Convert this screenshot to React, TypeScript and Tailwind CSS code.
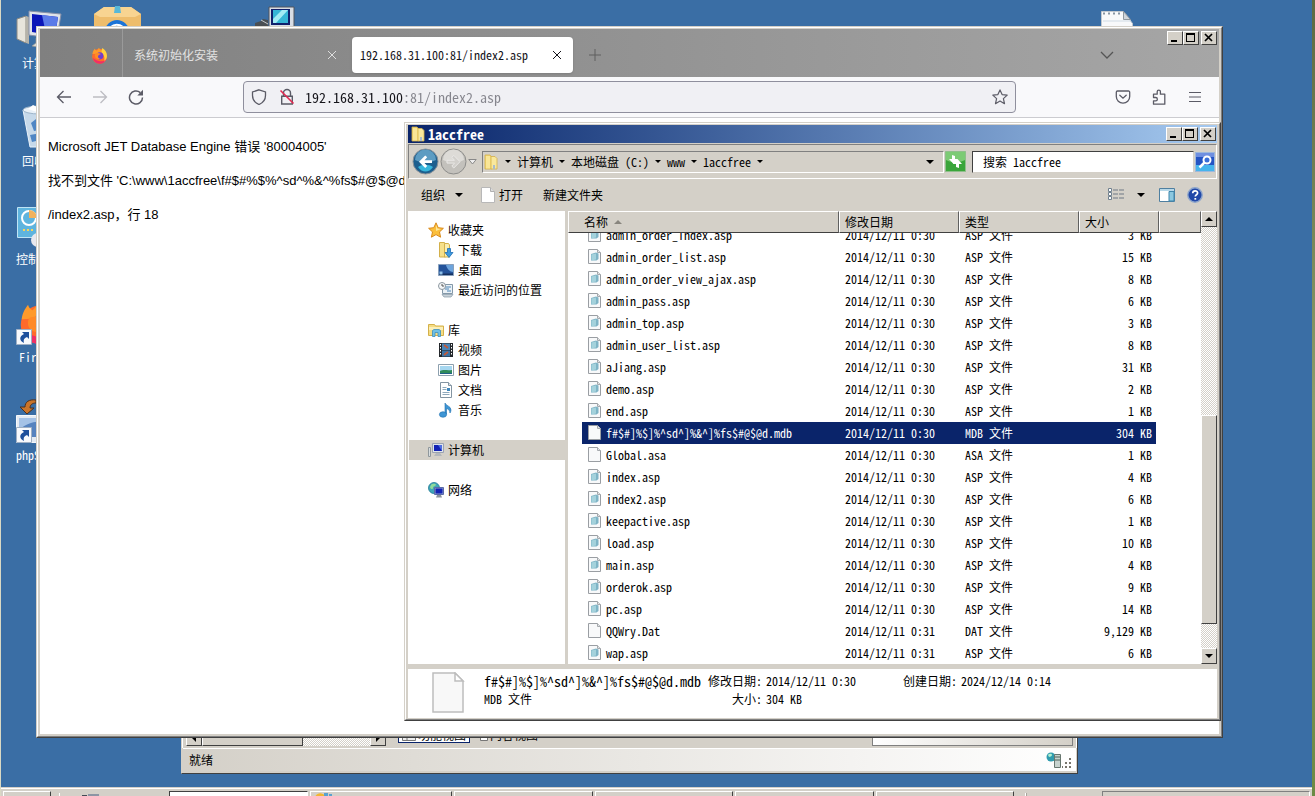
import React from 'react';

const SONG = "[font-family:'Noto_Sans_Mono_CJK_SC','Noto_Sans_CJK_SC',monospace]";
const RAISED = 'border border-t-white border-l-white border-r-[#404040] border-b-[#404040] bg-[#d4d0c8]';
const SUNKEN = 'border border-t-[#808080] border-l-[#808080] border-r-white border-b-white';

type FileKind = 'asp' | 'blank';

interface FileRow {
  name: string;
  date: string;
  type: string;
  size: string;
  kind: FileKind;
  selected?: boolean;
}

const files: FileRow[] = [
  { name: 'admin_order_index.asp', date: '2014/12/11 0:30', type: 'ASP 文件', size: '3 KB', kind: 'asp' },
  { name: 'admin_order_list.asp', date: '2014/12/11 0:30', type: 'ASP 文件', size: '15 KB', kind: 'asp' },
  { name: 'admin_order_view_ajax.asp', date: '2014/12/11 0:30', type: 'ASP 文件', size: '8 KB', kind: 'asp' },
  { name: 'admin_pass.asp', date: '2014/12/11 0:30', type: 'ASP 文件', size: '6 KB', kind: 'asp' },
  { name: 'admin_top.asp', date: '2014/12/11 0:30', type: 'ASP 文件', size: '3 KB', kind: 'asp' },
  { name: 'admin_user_list.asp', date: '2014/12/11 0:30', type: 'ASP 文件', size: '8 KB', kind: 'asp' },
  { name: 'aJiang.asp', date: '2014/12/11 0:30', type: 'ASP 文件', size: '31 KB', kind: 'asp' },
  { name: 'demo.asp', date: '2014/12/11 0:30', type: 'ASP 文件', size: '2 KB', kind: 'asp' },
  { name: 'end.asp', date: '2014/12/11 0:30', type: 'ASP 文件', size: '1 KB', kind: 'asp' },
  { name: 'f#$#]%$]%^sd^]%&^]%fs$#@$@d.mdb', date: '2014/12/11 0:30', type: 'MDB 文件', size: '304 KB', kind: 'blank', selected: true },
  { name: 'Global.asa', date: '2014/12/11 0:30', type: 'ASA 文件', size: '1 KB', kind: 'blank' },
  { name: 'index.asp', date: '2014/12/11 0:30', type: 'ASP 文件', size: '4 KB', kind: 'asp' },
  { name: 'index2.asp', date: '2014/12/11 0:30', type: 'ASP 文件', size: '6 KB', kind: 'asp' },
  { name: 'keepactive.asp', date: '2014/12/11 0:30', type: 'ASP 文件', size: '1 KB', kind: 'asp' },
  { name: 'load.asp', date: '2014/12/11 0:30', type: 'ASP 文件', size: '10 KB', kind: 'asp' },
  { name: 'main.asp', date: '2014/12/11 0:30', type: 'ASP 文件', size: '4 KB', kind: 'asp' },
  { name: 'orderok.asp', date: '2014/12/11 0:30', type: 'ASP 文件', size: '9 KB', kind: 'asp' },
  { name: 'pc.asp', date: '2014/12/11 0:30', type: 'ASP 文件', size: '14 KB', kind: 'asp' },
  { name: 'QQWry.Dat', date: '2014/12/11 0:31', type: 'DAT 文件', size: '9,129 KB', kind: 'blank' },
  { name: 'wap.asp', date: '2014/12/11 0:31', type: 'ASP 文件', size: '6 KB', kind: 'asp' },
];

/* ---------- icons ---------- */

const FileIcon: React.FC<{ kind: FileKind }> = ({ kind }) => (
  <svg width="14" height="16" viewBox="0 0 14 16" className="block">
    <path d="M.5.5h9l3 3v11H.5z" fill="#f8f9fa" stroke="#9a9ea3" />
    <path d="M9.500.5v3h3" fill="#e3e6e8" stroke="#a6aaae" />
    {kind === 'asp' && (
      <>
        <path d="M3 5l5-1.500 2.500 1v5.500l-2 1.500H3z" fill="#7fb4c6" />
        <path d="M3.500 5.500l4.500-1v6l-4.500 1z" fill="#a4d2dc" />
      </>
    )}
  </svg>
);

const FolderIcon = () => (
  <svg width="16" height="16" viewBox="0 0 16 16" className="block">
    <path d="M2 1h5l1.500 2v12H2z" fill="#f3d976" stroke="#d3b04a" strokeWidth=".8" />
    <path d="M8 2.500h4l2 2V15H8z" fill="#f9e89c" stroke="#d3b04a" strokeWidth=".8" />
    <path d="M4 2v12.500M6 2v12.500" stroke="#fff2b8" />
    <path d="M10 11h2v4h-2z" fill="#a9bccb" />
  </svg>
);

const FirefoxIcon: React.FC<{ className?: string }> = ({ className }) => (
  <svg viewBox="0 0 48 48" className={className}>
    <circle cx="24" cy="26" r="21" fill="#ff6a2b" />
    <path d="M4 20C5 11 9 7 11 4c1 4 3 5 5 6 3-3 5-5 6-8 3 4 5 7 12 9 8 4 12 12 11 19l-6-12z" fill="#ff9a2a" />
    <path d="M32 3c8 5 13 12 13 22 0 7-3 14-9 18 3-8 3-16-2-21-4-5-6-11-2-19z" fill="#ffd23e" />
    <path d="M5 31c3 11 11 16 19 16 9 0 17-5 20-14-5 6-11 8-18 7-9-1-15-5-21-9z" fill="#f02f66" />
    <circle cx="25" cy="25" r="10" fill="#6f3fd0" />
    <path d="M13 18c6-2 11 0 15 2-3 2-7 2-8 6-2 4 3 7 8 6-6 5-16 1-17-6-.5-3 0-6 2-8z" fill="#ff8a26" />
  </svg>
);

const ComputerIcon: React.FC<{ className?: string }> = ({ className }) => (
  <svg viewBox="0 0 48 44" className={className}>
    <path d="M1 12l9-3v27l-9-4z" fill="#e7e5dc" stroke="#8c8a82" />
    <path d="M10 9l3 1v27l-3-1z" fill="#b5b3aa" />
    <path d="M13 4l32 3-4 25-28-4z" fill="#dfe3ea" stroke="#8690a8" />
    <path d="M16 7l26 3-3 19-23-4z" fill="#0b16b8" />
    <path d="M26 8l16 2-3 19-9-2z" fill="#5b7be8" />
    <path d="M20 31l10 2 2 5 5 1-3 3-18-3 4-3z" fill="#d8d8d2" stroke="#9a9a94" strokeWidth=".7" />
  </svg>
);

const RecycleIcon = () => (
  <svg viewBox="0 0 48 44" className="h-11 w-12">
    <path d="M7 5l34 0-5 37H14z" fill="#c6d9ea" stroke="#e9f2fa" />
    <ellipse cx="24" cy="5" rx="17" ry="4" fill="#e9f1f8" stroke="#9db4c9" />
    <path d="M12 4l5-4 6 3 5-3 7 5-11 3z" fill="#fff" />
    <path d="M15 18l5-4 4 5-3 1 2 5-5 1zM14 30l11-2 3 6-12 3z" fill="#4f86c4" />
    <path d="M27 15l6 3-3 8-4-5z" fill="#6d9fd4" />
  </svg>
);

const ControlPanelIcon = () => (
  <svg viewBox="0 0 48 44" className="h-11 w-12">
    <path d="M1.500 4.500h43v30h-43z" fill="#5fb4de" stroke="#bfe4f5" />
    <circle cx="13" cy="15" r="7" fill="none" stroke="#fff" strokeWidth="2" />
    <path d="M13 15V7a8 8 0 018 8z" fill="#f2b25c" />
    <path d="M7 27h12" stroke="#f7d65c" strokeWidth="2" strokeDasharray="2 2" />
    <circle cx="22" cy="37" r="7" fill="#e8e8ee" />
    <path d="M26 11h14M26 16h14M26 21h14" stroke="#d5eefa" strokeWidth="2" />
  </svg>
);

const ShortcutArrow = () => (
  <svg viewBox="0 0 16 16" className="absolute bottom-0 left-0 h-4 w-4">
    <path d="M.5.5h15v15H.5z" fill="#f7f9fc" stroke="#9fb0c4" />
    <path d="M6 3h7v7l-2-2c-3 1-4 3-3 6-5-2-5-7 0-9z" fill="#1d4f9c" />
  </svg>
);

const PhpStudyIcon = () => (
  <svg viewBox="0 0 48 44" className="h-11 w-12">
    <path d="M20 1c-7-1-11 2-11 7H4l7 7 7-6h-4c0-3 2-5 6-5z" fill="#c8742a" stroke="#4a3020" />
    <path d="M.5 16.500h44v27H.5z" fill="#e4ebf3" stroke="#f6f9fc" />
    <path d="M3 19h39v19H3z" fill="#5683bf" />
    <path d="M3 31c9-9 21-10 39-8v-4H3z" fill="#a4c2e6" />
  </svg>
);

const CaretDown: React.FC<{ small?: boolean }> = ({ small }) => (
  <svg width={small ? 6 : 8} height={small ? 3 : 4} viewBox="0 0 8 4" className="block shrink-0">
    <path d="M0 0h8L4 4z" fill="#000" />
  </svg>
);

const StarIcon = () => (
  <svg width="16" height="16" viewBox="0 0 16 16">
    <path d="M8 .8l2.200 4.900 5.200.6-3.900 3.600 1.100 5.300L8 12.600l-4.600 2.600 1.100-5.300L.6 6.300l5.200-.6z" fill="#fbbf3b" stroke="#d98a1c" />
    <path d="M8 3l1.400 3.600L13 7 8 9z" fill="#ffe79a" />
  </svg>
);

const DownloadIcon = () => (
  <svg width="16" height="16" viewBox="0 0 16 16">
    <path d="M1.500.5h5l1 1.500v13h-6z" fill="#f6e08a" stroke="#d3b04a" />
    <path d="M6.500 1.500h4l1 1.500v12h-5z" fill="#faeeb0" stroke="#d3b04a" />
    <path d="M9.500 6.500h3v4H15l-4 5-4-5h2.500z" fill="#3f9be0" stroke="#1d6cb4" strokeWidth=".8" />
  </svg>
);

const DesktopIcon = () => (
  <svg width="16" height="16" viewBox="0 0 16 16">
    <path d="M.5 2.500h15v11H.5z" fill="#24539a" stroke="#88a0bc" />
    <path d="M8 3h7v7C12 10 9 7 8 3z" fill="#6da4dc" />
    <path d="M1 11.500h14V13H1z" fill="#15305f" />
    <path d="M1.500 9.500h3v3h-3z" fill="#8fc0e8" />
  </svg>
);

const RecentIcon = () => (
  <svg width="16" height="16" viewBox="0 0 16 16">
    <path d="M4.500 2.500h10v9h-10z" fill="#eaf1f6" stroke="#8498a8" />
    <path d="M7 5h6M7 7h4M9 9h4" stroke="#4c86b8" />
    <path d="M4 12.500h11l-2 2.500H6z" fill="#c9d2d8" stroke="#8498a8" strokeWidth=".7" />
    <circle cx="4" cy="4" r="3.500" fill="#f5f7f8" stroke="#8b969e" />
    <path d="M4 2v2h2" stroke="#555" fill="none" />
  </svg>
);

const LibraryIcon = () => (
  <svg width="16" height="16" viewBox="0 0 16 16">
    <path d="M.5 2.500h6l1 1.500h8v9.500H.5z" fill="#f5dc82" stroke="#d3b04a" />
    <path d="M1 5h14v3H1z" fill="#fbefb8" />
    <path d="M4.500 14.500v-6l1.500-1h5l1.500 1v6h-2.500v-4h-3v4z" fill="#6fc0e6" stroke="#3c8fbe" strokeWidth=".8" />
  </svg>
);

const VideoIcon = () => (
  <svg width="16" height="16" viewBox="0 0 16 16">
    <path d="M1 1h14v14H1z" fill="#23272b" />
    <path d="M4 1.500h8V8H4z" fill="#4a86b8" />
    <path d="M4 8.500h8v6H4z" fill="#3b74a6" />
    <path d="M6 3l4 3M6 13l4-3" stroke="#c05a3a" strokeWidth="2" />
    <path d="M2.500 2v12M13.500 2v12" stroke="#fff" strokeDasharray="1.500 1.500" />
  </svg>
);

const PictureIcon = () => (
  <svg width="16" height="16" viewBox="0 0 16 16">
    <path d="M.5 2.500h15v11H.5z" fill="#fff" stroke="#8da0ae" />
    <path d="M2 4h12v8H2z" fill="#a6d7f0" />
    <path d="M2 9c4-2 7 0 12-1v4H2z" fill="#2f8a5a" />
    <path d="M2 11h12v1H2z" fill="#1f5f86" />
  </svg>
);

const DocumentIcon = () => (
  <svg width="16" height="16" viewBox="0 0 16 16">
    <path d="M2.500.5h8l3 3v12h-11z" fill="#fff" stroke="#8394a2" />
    <path d="M10.500.5v3h3" fill="#dfe6ec" stroke="#8394a2" />
    <path d="M4.500 5.500h4M4.500 7.500h4M4.500 10.500h7M4.500 12.500h7" stroke="#8fa9bc" />
    <path d="M9 6h3v3H9z" fill="#3c86bd" />
  </svg>
);

const MusicIcon = () => (
  <svg width="16" height="16" viewBox="0 0 16 16">
    <path d="M7 1c1 3 6 3 6 7 0 1-.5 2-1 3 0-3-2-4-3.500-4.500V12H7z" fill="#3e95d4" stroke="#1f6fae" strokeWidth=".6" />
    <ellipse cx="5" cy="12.500" rx="3.600" ry="2.800" fill="#3e95d4" stroke="#1f6fae" strokeWidth=".6" />
  </svg>
);

const MonitorIcon = () => (
  <svg width="16" height="16" viewBox="0 0 16 16">
    <path d="M.5 5.500h2v9h-2z" fill="#d8dde0" stroke="#8f979c" />
    <path d="M4.500 1.500h11v9h-11z" fill="#dfe3ea" stroke="#9aa3b2" />
    <path d="M6 3h8v6H6z" fill="#1222b4" />
    <path d="M10 3h4v6z" fill="#4f6fe0" />
    <path d="M8 11h4l2 3H6z" fill="#b3b7bc" />
  </svg>
);

const NetworkIcon = () => (
  <svg width="16" height="16" viewBox="0 0 16 16">
    <circle cx="6" cy="6" r="5.500" fill="#3fa6b8" stroke="#1e7a94" strokeWidth=".8" />
    <path d="M3 3c2-2 5-1 5 0s-3 1-3 3-3 1-3-1z" fill="#8fdc9a" />
    <path d="M6.500 5.500h9v7h-9z" fill="#8fa0d0" stroke="#5a6aa6" />
    <path d="M7.500 6.500h7v5h-7z" fill="#1222b4" />
    <path d="M9 13h4l1 2.500H8z" fill="#8a929c" />
  </svg>
);

/* ---------- shared bits ---------- */

const WindowButtons = () => (
  <div className="flex">
    <button aria-label="最小化" className={`flex h-[14px] w-4 items-end justify-start ${RAISED}`}>
      <svg width="14" height="12" viewBox="0 0 14 12"><path d="M3 8h6v2H3z" /></svg>
    </button>
    <button aria-label="最大化" className={`flex h-[14px] w-4 items-center justify-center ${RAISED}`}>
      <svg width="14" height="12" viewBox="0 0 14 12"><path d="M2 1h9v9H2zm1 2v6h7V3z" fillRule="evenodd" /></svg>
    </button>
    <button aria-label="关闭" className={`ml-0.5 flex h-[14px] w-4 items-center justify-center ${RAISED}`}>
      <svg width="14" height="12" viewBox="0 0 14 12"><path d="M3 2l7 7M10 2L3 9" stroke="#000" strokeWidth="1.700" /></svg>
    </button>
  </div>
);

const shortcuts = [
  { label: '计算机', icon: <ComputerIcon className="h-11 w-12" />, link: false },
  { label: '回收站', icon: <RecycleIcon />, link: false },
  { label: '控制面板', icon: <ControlPanelIcon />, link: false },
  { label: 'Firefox', icon: <FirefoxIcon className="h-11 w-12" />, link: true },
  { label: 'phpStudy', icon: <PhpStudyIcon />, link: true },
];

const DesktopIcons = () => (
  <>
    <ul className="absolute left-0 top-[7px] w-[78px]">
      {shortcuts.map((s) => (
        <li key={s.label} className="flex h-[98px] flex-col items-center">
          <div className="relative">
            {s.icon}
            {s.link && <ShortcutArrow />}
          </div>
          <span className="mt-1 text-[12px] leading-4 text-white">{s.label}</span>
        </li>
      ))}
    </ul>
    <svg viewBox="0 0 48 40" className="absolute left-[92px] top-[6px] h-10 w-12">
      <path d="M1 8l10-7h27l10 7v30H1z" fill="#eebd6c" />
      <path d="M1 8l10-7h27l10 7-6 3H7z" fill="#f8d491" />
      <path d="M22 0h5l1 7h-7z" fill="#58b8d8" />
      <circle cx="24" cy="26" r="12" fill="#1b74d8" />
      <path d="M18 21c3-3 8-3 12 0" stroke="#fff" strokeWidth="2" fill="none" />
    </svg>
    <svg viewBox="0 0 44 40" className="absolute left-[250px] top-[6px] h-10 w-11">
      <path d="M18 1h25v22H18z" fill="#d8dde4" stroke="#50555c" />
      <path d="M20 3h19v16H20z" fill="#10206c" />
      <path d="M22 4h15v13H22z" fill="#36b6d6" />
      <path d="M22 13l9-9h6L25 17h-3z" fill="#a2ecf4" />
      <path d="M4 17l6-2 2-2 5 1v8H4z" fill="#4b4f52" />
      <path d="M10 14l7 4" stroke="#c5c8ca" />
    </svg>
    <svg viewBox="0 0 32 36" className="absolute right-[179px] top-[10px] h-9 w-8">
      <path d="M.5 1.500h22l9 12V36H.5z" fill="#f8f9fa" stroke="#c2c8ce" />
      <path d="M22.500 1.500v8h7z" fill="#d0d5da" stroke="#8f979e" />
      <path d="M2 3.500h20" stroke="#8795a2" strokeWidth="2" strokeDasharray="2 3" />
      <path d="M2 11h28" stroke="#d0dbe4" />
    </svg>
  </>
);

/* ---------- server manager window, mostly covered ---------- */

const ManagerWindow = () => (
  <section className="absolute bottom-[13px] left-[180px] right-[234px] flex h-40 flex-col border border-t-[#d4d0c8] border-l-[#d4d0c8] border-r-[#404040] border-b-[#404040] bg-[#d4d0c8]">
    <div className="flex min-h-0 flex-1 flex-col border border-b-0 border-white px-[3px]">
      <div className="flex flex-1 items-end pb-[2px]">
        <div className="flex h-4 w-[200px] bg-[repeating-conic-gradient(#d4d0c8_0_25%,#fff_0_50%)] bg-[length:2px_2px]">
          <button aria-label="向左滚动" className={`flex w-4 items-center justify-center ${RAISED}`}>
            <svg width="4" height="8" viewBox="0 0 4 8"><path d="M4 0v8L0 4z" /></svg>
          </button>
          <div className={`w-[101px] ${RAISED}`} />
          <div className="flex-1" />
          <button aria-label="向右滚动" className={`flex w-4 items-center justify-center ${RAISED}`}>
            <svg width="4" height="8" viewBox="0 0 4 8"><path d="M0 0v8l4-4z" /></svg>
          </button>
        </div>
        <div className="ml-3 flex items-center gap-[10px] pb-[3px] text-[12px] leading-4">
          <button className="flex h-4 items-center gap-0.5 border border-[#0a246a] bg-white px-[3px]">
            <svg width="14" height="12" viewBox="0 0 14 12"><path d="M.5.500h13v11H.5zM5 .5v11" fill="#eee" stroke="#777" /></svg>
            功能视图
          </button>
          <button className="flex h-4 items-center gap-0.5">
            <svg width="8" height="12" viewBox="0 0 8 12"><path d="M.5.500h7v11h-7z" fill="#fff" stroke="#777" /></svg>
            内容视图
          </button>
        </div>
        <div className="ml-auto h-full w-[201px] border border-[#808080] bg-linear-to-r from-white to-[#d4d0c8]" />
      </div>
    </div>
    <footer className="mx-px mb-[2px] flex h-[23px] items-center justify-between border-t border-white bg-linear-to-r from-[#d4d0c8] to-white pl-[6px] pr-1 text-[12px]">
      <span>就绪</span>
      <span className="flex items-end">
        <svg width="16" height="18" viewBox="0 0 16 18">
          <circle cx="5" cy="6" r="4.500" fill="#2f9cae" />
          <path d="M2 4c2-2 4-1 4 0s-2 2-3 2z" fill="#b4f0d0" />
          <path d="M8.500 3.500h6v13h-6z" fill="#c7d2ce" stroke="#67766f" />
          <path d="M9 6h5M9 9h5" stroke="#4c6258" />
        </svg>
        <svg width="10" height="12" viewBox="0 0 10 12" fill="#77746c">
          <path d="M7 1h2v2H7zM3 5h2v2H3zM7 5h2v2H7zM0 9h1v2H0zM3 9h2v2H3zM7 9h2v2H7z" />
        </svg>
      </span>
    </footer>
  </section>
);

/* ---------- browser ---------- */

const BrowserWindow = () => (
  <section className="absolute bottom-[49px] left-[35px] right-[89px] top-[26px] border border-t-[#d4d0c8] border-l-[#d4d0c8] border-r-[#404040] border-b-[#404040] bg-[#d4d0c8]">
    <div className="flex h-full flex-col border border-t-white border-l-white border-r-[#808080] border-b-[#808080] bg-[#d4d0c8] px-[2px] pb-[2px] pt-px">
      <header className="flex h-12 shrink-0 items-start bg-linear-to-r from-[#808080] to-[#a6a6a6]">
        <div className="flex h-full w-[83px] items-center justify-end border-r border-[#9a9a9a] pr-[14px] pt-1">
          <FirefoxIcon className="h-[17px] w-[17px]" />
        </div>
        <div className="flex h-full min-w-0 items-center pt-1">
          <div className="flex w-[229px] items-center justify-between pl-[11px] pr-[15px] text-[12px] text-[#e2e2e2]">
            <span>系统初始化安装</span>
            <button aria-label="关闭标签页">
              <svg width="10" height="10" viewBox="0 0 10 10" className="block"><path d="M1 1l8 8M9 1L1 9" stroke="#dedede" /></svg>
            </button>
          </div>
          <div className="flex h-9 w-[221px] items-center justify-between rounded bg-white pl-2 pr-[11px] text-[12px] text-[#15141a] shadow">
            <span className="whitespace-nowrap">192.168.31.100:81/index2.asp</span>
            <button aria-label="关闭标签页">
              <svg width="10" height="10" viewBox="0 0 10 10" className="block"><path d="M1 1l8 8M9 1L1 9" stroke="#15141a" /></svg>
            </button>
          </div>
          <button aria-label="新建标签页" className="ml-[15px]">
            <svg width="14" height="14" viewBox="0 0 14 14" className="block"><path d="M7 1v12M1 7h12" stroke="#5e5e5e" /></svg>
          </button>
        </div>
        <button aria-label="列出所有标签页" className="ml-auto mr-[53px] mt-[22px]">
          <svg width="14" height="8" viewBox="0 0 14 8" className="block"><path d="M1 1l6 6 6-6" fill="none" stroke="#555" strokeWidth="1.300" /></svg>
        </button>
        <div className="mr-[2px] mt-[2px]">
          <WindowButtons />
        </div>
      </header>

      <nav className="flex h-[41px] shrink-0 items-center border-b border-[#ccccd0] bg-[#f9f9fb] text-[#5b5b66]">
        <button aria-label="后退" className="ml-4">
          <svg width="16" height="16" viewBox="0 0 16 16" className="block" fill="none" stroke="currentColor" strokeWidth="1.300"><path d="M15 8H1.500M7.500 2L1.500 8l6 6" /></svg>
        </button>
        <button aria-label="前进" className="ml-5 text-[#bdbdc2]">
          <svg width="16" height="16" viewBox="0 0 16 16" className="block" fill="none" stroke="currentColor" strokeWidth="1.300"><path d="M1 8h13.500M8.500 2l6 6-6 6" /></svg>
        </button>
        <button aria-label="刷新" className="ml-5">
          <svg width="16" height="16" viewBox="0 0 16 16" className="block" fill="none" stroke="currentColor" strokeWidth="1.500">
            <path d="M14.500 8.500A6.500 6.500 0 1112.300 3.600" />
            <path d="M15 .8v5.700H9.300z" fill="currentColor" stroke="none" />
          </svg>
        </button>
        <div className="ml-[99px] mr-[99px] flex h-8 min-w-0 flex-1 items-center rounded border border-[#8f8f9d] bg-[#f0f0f4] px-[7px]">
          <svg width="16" height="16" viewBox="0 0 16 16" className="shrink-0" fill="none" stroke="currentColor" strokeWidth="1.300">
            <path d="M8 .8L14.500 3v3.500c0 4.500-3 7.500-6.500 9-3.500-1.500-6.500-4.500-6.500-9V3z" />
          </svg>
          <svg width="16" height="18" viewBox="0 0 16 18" className="ml-3 shrink-0" fill="none" stroke="currentColor" strokeWidth="1.400">
            <path d="M4.500 8V5a3.500 3.500 0 017 0v3M2.700 8.200h10.600v7.800H2.700z" />
            <path d="M1.500 2.500l13 13" stroke="#e22850" strokeWidth="1.600" />
          </svg>
          <input
            aria-label="地址"
            defaultValue="192.168.31.100:81/index2.asp"
            className="ml-[10px] min-w-0 flex-1 bg-[linear-gradient(90deg,#15141a_98px,#85858d_98px)] bg-clip-text text-[14px] text-transparent outline-none"
          />
          <button aria-label="收藏">
            <svg width="16" height="16" viewBox="0 0 16 16" className="block" fill="none" stroke="currentColor" strokeWidth="1.200" strokeLinejoin="round">
              <path d="M8 .9l2.100 4.700 5.100.5-3.800 3.500 1.100 5.100L8 12.100l-4.500 2.600 1.100-5.100L.8 6.100l5.100-.5z" />
            </svg>
          </button>
        </div>
        <button aria-label="Pocket">
          <svg width="16" height="16" viewBox="0 0 16 16" className="block" fill="none" stroke="currentColor" strokeWidth="1.300" strokeLinecap="round">
            <path d="M2.500 2h11a1.200 1.200 0 011.200 1.200v4.300a6.700 6.700 0 01-13.400 0V3.200A1.200 1.200 0 012.500 2z" />
            <path d="M4.800 6.200L8 9.200l3.200-3" />
          </svg>
        </button>
        <button aria-label="扩展" className="ml-5">
          <svg width="16" height="16" viewBox="0 0 16 16" className="block" fill="none" stroke="currentColor" strokeWidth="1.300" strokeLinejoin="round">
            <path d="M2.500 5.200h3.700V2.700a1.600 1.600 0 013.200 0v2.500h4.400v10H2.500v-3.400h2.200a1.600 1.600 0 000-3.300H2.500z" />
          </svg>
        </button>
        <button aria-label="打开应用程序菜单" className="ml-[21px] mr-[17px]">
          <svg width="14" height="12" viewBox="0 0 14 12" className="block"><path d="M1 1.500h12M1 6h12M1 10.500h12" stroke="currentColor" strokeWidth="1.200" /></svg>
        </button>
      </nav>

      <main className="min-h-0 flex-1 space-y-[14px] overflow-hidden bg-white pl-2 pt-[19px] text-[13px] leading-5 text-black [font-family:'Liberation_Sans','Noto_Sans_CJK_SC',sans-serif]">
        <p>Microsoft JET Database Engine 错误 '80004005'</p>
        <p>找不到文件 'C:\www\1accfree\f#$#%$%^sd^%&amp;^%fs$#@$@d.mdb'。</p>
        <p>/index2.asp，行 18</p>
      </main>
    </div>
  </section>
);

/* ---------- explorer ---------- */

const AddressBar = () => (
  <div className="mt-[1px] flex h-[35px] shrink-0 items-center border border-t-[#808080] border-l-[#808080] border-r-white border-b-white pl-[3px] pr-px text-[12px]">
    <div className="flex shrink-0 items-center">
      <button aria-label="后退">
        <svg width="27" height="27" viewBox="0 0 27 27" className="block">
          <circle cx="13.500" cy="13.500" r="12.500" fill="#1d5f8e" stroke="#8b9299" />
          <path d="M3 12a10.500 10.500 0 0121 0c-6 3-15 3-21 0z" fill="#5d9cc2" />
          <path d="M6 19c4 6 11 6 15 0-4-3-11-3-15 0z" fill="#37b6dc" />
          <path d="M20 12.300v2.800h-7.500l2.700 3-2 1.900-6.200-6.300 6.200-6.300 2 1.900-2.700 3z" fill="#fff" />
        </svg>
      </button>
      <button aria-label="前进" className="ml-[1px]">
        <svg width="27" height="27" viewBox="0 0 27 27" className="block">
          <circle cx="13.500" cy="13.500" r="12.500" fill="#c3c1bc" stroke="#8c8c8a" />
          <path d="M3 12a10.500 10.500 0 0121 0c-6 3-15 3-21 0z" fill="#dddbd7" />
          <path d="M7 12.300v2.800h7.500l-2.700 3 2 1.900 6.200-6.300-6.200-6.300-2 1.900 2.700 3z" fill="#d2d0cc" stroke="#e9e8e6" />
        </svg>
      </button>
      <button aria-label="最近浏览的位置" className="ml-px">
        <svg width="9" height="6" viewBox="0 0 9 6" className="block"><path d="M.8.500h7.400L4.500 5z" fill="#eee" stroke="#888" /></svg>
      </button>
    </div>
    <div className={`ml-[5px] flex h-[22px] min-w-0 flex-1 items-center whitespace-nowrap ${SUNKEN}`}>
      <FolderIcon />
      <div className="ml-[6px] flex items-center gap-[6px]">
        <CaretDown small />
        <a href="#computer">计算机</a>
        <CaretDown small />
        <a href="#c">本地磁盘 (C:)</a>
        <CaretDown small />
        <a href="#www">www</a>
        <CaretDown small />
        <a href="#folder">1accfree</a>
        <CaretDown small />
      </div>
      <button aria-label="以前的位置" className="ml-auto mr-[9px]"><CaretDown /></button>
    </div>
    <button aria-label="刷新" className="ml-px">
      <svg width="21" height="21" viewBox="0 0 21 21" className="block">
        <path d="M.5.500h20v20H.5z" fill="#3aa53a" stroke="#8fbf8a" />
        <path d="M1 1h19v8c-6 3-13 3-19 0z" fill="#7ccb74" />
        <path d="M7 4v4H4l4.500 5L13 8h-3V5zM14 17v-4h3l-4.500-5L8 13h3v3z" fill="#fff" />
      </svg>
    </button>
    <input
      aria-label="搜索"
      defaultValue="搜索 1accfree"
      className="ml-[6px] h-[22px] w-[222px] shrink-0 border border-t-[#404040] border-l-[#404040] border-r-[#d4d0c8] border-b-[#d4d0c8] bg-white pl-[10px] outline-none"
    />
    <button aria-label="开始搜索" className="ml-px">
      <svg width="20" height="20" viewBox="0 0 20 20" className="block">
        <path d="M.5.500h19v19H.5z" fill="#2454c4" stroke="#9db8dc" />
        <path d="M1 13h18v6H1z" fill="#46b4ec" />
        <path d="M1 1h18v4H1z" fill="#6f8fe0" />
        <circle cx="12" cy="8" r="3.500" fill="#3a6fd8" stroke="#fff" strokeWidth="2" />
        <path d="M9.500 10.500l-5 5" stroke="#fff" strokeWidth="2.500" />
      </svg>
    </button>
  </div>
);

const CommandBar = () => (
  <div className="mb-px flex h-[31px] shrink-0 items-center pl-[13px] pr-[14px] text-[12px]">
    <button className="flex items-center gap-[10px]">组织<CaretDown /></button>
    <button className="ml-[18px] flex items-center gap-1">
      <svg width="14" height="16" viewBox="0 0 14 16"><path d="M.5.500h9l4 4v11H.5z" fill="#fff" stroke="#b8b8b8" /><path d="M9.500.5v4h4" fill="#ddd" stroke="#b0b0b0" /></svg>
      打开
    </button>
    <button className="ml-5">新建文件夹</button>
    <button aria-label="更改您的视图" className="ml-auto flex items-center gap-[13px]">
      <svg width="16" height="13" viewBox="0 0 16 13" fill="none">
        <path d="M.5.5h3v3h-3zM.5 4.500h3v3h-3zM.5 8.500h3v3h-3z" fill="#fff" stroke="#70808e" />
        <path d="M5 2h11M5 6h11M5 10h11" stroke="#6f7985" strokeDasharray="5 1" />
      </svg>
      <CaretDown />
    </button>
    <button aria-label="显示预览窗格" className="ml-[14px]">
      <svg width="16" height="14" viewBox="0 0 16 14" className="block">
        <path d="M.5.500h15v13H.5z" fill="#fff" stroke="#4f7fa0" />
        <path d="M1 1h14v2H1z" fill="#b8d8e8" />
        <path d="M10 3.500h5v9.500h-5z" fill="#8cc8e0" stroke="#3f86ac" />
      </svg>
    </button>
    <button aria-label="获取帮助" className="ml-3">
      <svg width="16" height="16" viewBox="0 0 16 16" className="block">
        <circle cx="8" cy="8" r="7.200" fill="#2148a8" stroke="#8ea6cc" strokeWidth="1.400" />
        <path d="M5.700 6.300c0-3.400 4.900-3.200 4.900-.3 0 1.800-2.300 1.700-2.300 3.500" fill="none" stroke="#fff" strokeWidth="1.700" />
        <path d="M7.400 11h1.800v1.700H7.400z" fill="#fff" />
      </svg>
    </button>
  </div>
);

const groups = [
  {
    label: '收藏夹',
    icon: <StarIcon />,
    items: [
      { label: '下载', icon: <DownloadIcon /> },
      { label: '桌面', icon: <DesktopIcon /> },
      { label: '最近访问的位置', icon: <RecentIcon /> },
    ],
  },
  {
    label: '库',
    icon: <LibraryIcon />,
    items: [
      { label: '视频', icon: <VideoIcon /> },
      { label: '图片', icon: <PictureIcon /> },
      { label: '文档', icon: <DocumentIcon /> },
      { label: '音乐', icon: <MusicIcon /> },
    ],
  },
  { label: '计算机', icon: <MonitorIcon />, items: [], active: true },
  { label: '网络', icon: <NetworkIcon />, items: [] },
];

const FolderTree = () => (
  <aside className="flex w-[157px] shrink-0 flex-col gap-5 bg-white pl-px pt-[9px] text-[12px]">
    {groups.map((g) => (
      <div key={g.label}>
        <a href="#tree" className={`flex h-5 items-center gap-1 pl-[19px] ${g.active ? 'bg-[#d4d0c8]' : ''}`}>
          {g.icon}
          {g.label}
        </a>
        {g.items.map((item) => (
          <a key={item.label} href="#tree" className="flex h-5 items-center gap-1 pl-[29px]">
            {item.icon}
            {item.label}
          </a>
        ))}
      </div>
    ))}
  </aside>
);

const TH = 'h-[22px] border border-t-white border-l-white border-r-[#606060] border-b-[#404040] bg-[#d4d0c8] p-0 pl-[5px] text-left font-normal';

const FileList = () => (
  <div className="flex min-w-0 flex-1 flex-col bg-white">
    <table className="w-full table-fixed border-separate border-spacing-0 text-[12px] leading-4">
      <colgroup>
        <col />
        <col className="w-[120px]" />
        <col className="w-[120px]" />
        <col className="w-20" />
        <col className="w-[42px]" />
      </colgroup>
      <thead>
        <tr>
          <th className={TH}>
            <span className="flex items-center gap-[6px] pl-[10px]">
              名称
              <svg width="8" height="4" viewBox="0 0 8 4"><path d="M0 4h8L4 0z" fill="#88857e" /></svg>
            </span>
          </th>
          <th className={TH}>修改日期</th>
          <th className={TH}>类型</th>
          <th className={TH}>大小</th>
          <th className={TH} aria-label="其他" />
        </tr>
      </thead>
    </table>
    {/* list is scrolled to its end, so the first row is cut off by the header */}
    <div className="flex min-h-0 flex-1 flex-col justify-end overflow-hidden pl-[14px] pr-[45px]">
      <table className="w-full table-fixed border-collapse text-[12px] leading-4">
        <colgroup>
          <col />
          <col className="w-[120px]" />
          <col className="w-[120px]" />
          <col className="w-[77px]" />
        </colgroup>
        <tbody>
          {files.map((f) => (
            <tr key={f.name} className={f.selected ? 'h-[22px] bg-[#0a246a] text-white' : 'h-[22px]'}>
              <td className="p-0 pl-[6px]">
                <span className="flex items-center gap-1 whitespace-nowrap">
                  <FileIcon kind={f.kind} />
                  {f.name}
                </span>
              </td>
              <td className="p-0 pl-[6px]">{f.date}</td>
              <td className="p-0 pl-[6px]">{f.type}</td>
              <td className="p-0 pr-1 text-right">{f.size}</td>
            </tr>
          ))}
        </tbody>
      </table>
    </div>
  </div>
);

const ScrollBar = () => (
  <div className="flex w-4 shrink-0 flex-col bg-[repeating-conic-gradient(#d4d0c8_0_25%,#fff_0_50%)] bg-[length:2px_2px]">
    <button aria-label="向上滚动" className={`flex h-4 items-center justify-center ${RAISED}`}>
      <svg width="8" height="4" viewBox="0 0 8 4"><path d="M0 4h8L4 0z" /></svg>
    </button>
    <div className="flex-[47]" />
    <div className={`flex-[52] ${RAISED}`} />
    <div className="flex-[6]" />
    <button aria-label="向下滚动" className={`flex h-4 items-center justify-center ${RAISED}`}>
      <CaretDown />
    </button>
  </div>
);

const DetailsPane = () => (
  <footer className="mt-[5px] flex h-[49px] shrink-0 bg-white pl-6 pt-[3px] text-[12px] leading-[18px]">
    <svg width="33" height="41" viewBox="0 0 33 41" className="shrink-0">
      <path d="M1 1h22l8 8v31H1z" fill="#f8f8f8" stroke="#bdbdbd" strokeWidth="1.500" />
      <path d="M23 1v8h8z" fill="#fff" stroke="#bdbdbd" strokeWidth="1.500" />
    </svg>
    <dl className="ml-[19px] grid grid-cols-[219px_59px_136px_59px_auto] grid-rows-[18px_18px] items-center whitespace-nowrap">
      <dt className="text-[14px]">f#$#]%$]%^sd^]%&amp;^]%fs$#@$@d.mdb</dt>
      <dt className="text-right">修改日期:</dt>
      <dd className="pl-1">2014/12/11 0:30</dd>
      <dt className="text-right">创建日期:</dt>
      <dd className="pl-1">2024/12/14 0:14</dd>
      <dt>MDB 文件</dt>
      <dt className="text-right">大小:</dt>
      <dd className="pl-1">304 KB</dd>
    </dl>
  </footer>
);

const ExplorerWindow = () => (
  <section className="absolute bottom-[66px] left-[403px] right-[91px] top-[122px] border border-t-[#d4d0c8] border-l-[#d4d0c8] border-r-[#404040] border-b-[#404040] bg-[#d4d0c8]">
    <div className="flex h-full flex-col border border-t-white border-l-white border-r-[#808080] border-b-[#808080] bg-[#d4d0c8] px-[2px] py-px">
      <header className="flex h-[18px] shrink-0 items-center bg-linear-to-r from-[#0a246a] to-[#a6caf0] pl-0.5 pr-px text-[14px] font-bold leading-4 text-white">
        <FolderIcon />
        <span className="ml-0.5">1accfree</span>
        <span className="ml-auto">
          <WindowButtons />
        </span>
      </header>
      <AddressBar />
      <CommandBar />
      <div className="flex min-h-0 flex-1">
        <FolderTree />
        <div className="w-[3px] shrink-0 bg-[#d4d0c8]" />
        <FileList />
        <ScrollBar />
      </div>
      <DetailsPane />
    </div>
  </section>
);

/* ---------- taskbar ---------- */

const TaskBar = () => (
  <footer className="flex h-[9px] shrink-0 items-start overflow-hidden border-t border-[#d4d0c8] bg-[#d4d0c8] shadow-[inset_0_1px_0_#fff]">
    <button aria-label="开始" className={`ml-[2px] mt-[3px] h-6 w-[48px] ${RAISED}`} />
    <div className="ml-2 mt-[5px] h-6 w-[3px] border-l border-white bg-[#d4d0c8]" />
    <svg width="20" height="6" viewBox="0 0 20 6" className="ml-[18px] mt-[5px]">
      <path d="M2 2h5v4H2z" fill="#444a55" />
      <path d="M8 1h11v5H8z" fill="#8d95a4" />
    </svg>
    <div className="ml-[69px] mr-[3px] mt-[3px] flex flex-1 gap-[2px]">
      <button aria-label="1accfree" className="h-6 flex-1 border border-t-[#404040] border-l-[#404040] border-r-white bg-white" />
      <button aria-label="Firefox" className={`flex h-6 flex-1 items-start pl-1 ${RAISED}`}>
        <svg width="18" height="5" viewBox="0 0 18 5"><path d="M0 5c2-5 8-5 11 0z" fill="#f2b632" /><path d="M9 1h4v4H9zM14 2h3v3h-3z" fill="#5aa2cf" /></svg>
      </button>
      <button aria-label="任务" className={`h-6 flex-1 ${RAISED}`} />
      <button aria-label="任务" className={`h-6 flex-1 ${RAISED}`} />
      <button aria-label="任务" className={`h-6 flex-1 ${RAISED}`} />
      <button aria-label="任务" className={`h-6 flex-1 ${RAISED}`} />
    </div>
    <div className="ml-2 mt-[5px] h-6 w-[2px] border-l border-white bg-[#a8a49c]" />
    <div className={`ml-[75px] mr-[2px] mt-[3px] h-6 w-[208px] ${SUNKEN}`} />
  </footer>
);

export default function App() {
  return (
    <div className={`flex h-screen overflow-hidden text-black ${SONG}`}>
      <div className="w-px shrink-0 bg-[#d9d9c4]" />
      <div className="flex min-w-0 flex-1 flex-col">
        <div className="relative min-h-0 flex-1 overflow-hidden bg-[#3a6ea5]">
          <DesktopIcons />
          <ManagerWindow />
          <BrowserWindow />
          <ExplorerWindow />
        </div>
        <TaskBar />
      </div>
      <div className="w-[3px] shrink-0 bg-linear-to-b from-[#5c6b44] via-[#8a9c6a] to-[#6c8a44]" />
    </div>
  );
}
